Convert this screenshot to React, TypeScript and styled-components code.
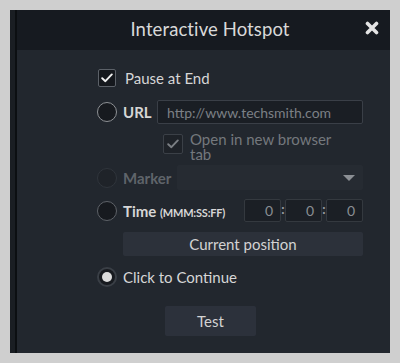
import React from 'react'
import styled, { createGlobalStyle } from 'styled-components'

const GlobalStyle = createGlobalStyle`
    html, body {
        margin: 0;
        padding: 0;
        background: #cfcfcf;
        font-family: Lato, "Open Sans", "Liberation Sans", sans-serif;
    }
`

export default function App() {
    return (
        <Page>
            <GlobalStyle />
            <Dialog>
                <EdgeStrip />
                <Main>
                    <Header>
                        <Title>Interactive Hotspot</Title>
                        <CloseButton aria-label="close">
                            <svg width="14" height="14" viewBox="0 0 14 14">
                                <path d="M2.5 2.5 L11.5 11.5 M11.5 2.5 L2.5 11.5" stroke="#e4e4e4" strokeWidth="3.6" strokeLinecap="round" />
                            </svg>
                        </CloseButton>
                    </Header>
                    <Body>
                        <Row $mt={0}>
                            <CheckBox $checked>
                                <CheckMark color="#f0f0f0" />
                            </CheckBox>
                            <Label $pad={9}>Pause at End</Label>
                        </Row>

                        <Row $mt={12}>
                            <Radio />
                            <Label $pad={6} $bold $width={40}>URL</Label>
                            <TextInput placeholder="http://www.techsmith.com" />
                        </Row>

                        <SubRow>
                            <CheckBox $disabled $size={20}>
                                <CheckMark color="#7b7f84" />
                            </CheckBox>
                            <SubLabel>Open in new browser tab</SubLabel>
                        </SubRow>

                        <Row $mt={3}>
                            <Radio $disabled />
                            <Label $pad={6} $bold $dim $width={60}>Marker</Label>
                            <Select>
                                <Caret />
                            </Select>
                        </Row>

                        <Row $mt={9}>
                            <Radio $muted />
                            <Label $pad={6} $bold>Time <Small>(MMM:SS:FF)</Small></Label>
                            <TimeGroup>
                                <TimeBox>0</TimeBox>
                                <Colon>:</Colon>
                                <TimeBox>0</TimeBox>
                                <Colon>:</Colon>
                                <TimeBox>0</TimeBox>
                            </TimeGroup>
                        </Row>

                        <WideButton>Current position</WideButton>

                        <Row $mt={11}>
                            <Radio $checked />
                            <Label $pad={6}>Click to Continue</Label>
                        </Row>

                        <TestButton>Test</TestButton>
                    </Body>
                </Main>
            </Dialog>
        </Page>
    )
}

function CheckMark({ color }: { color: string }) {
    return (
        <svg width="12" height="10" viewBox="0 0 12 10">
            <path d="M1.2 5.2 L4.4 8.2 L10.8 1.4" fill="none" stroke={color} strokeWidth="1.9" strokeLinecap="round" strokeLinejoin="round" />
        </svg>
    )
}

const Page = styled.div`
    padding: 10px;
    width: 400px;
    height: 363px;
    box-sizing: border-box;
`

const Dialog = styled.div`
    display: flex;
    height: 343px;
    background: #22272e;
`

const EdgeStrip = styled.div`
    width: 5px;
    background: #1a1e23;
    border-right: 2px solid #0c0f12;
`

const Main = styled.div`
    flex: 1;
    display: flex;
    flex-direction: column;
`

const Header = styled.div`
    height: 40px;
    display: flex;
    align-items: center;
    justify-content: center;
    position: relative;
    background: #161a20;
    padding-left: 13px;
`

const Title = styled.div`
    color: #d9d9d9;
    font-size: 18.5px;
    letter-spacing: 0.1px;
    margin-top: -3px;
`

const CloseButton = styled.div`
    position: absolute;
    right: 11px;
    top: 11px;
    display: flex;
`

const Body = styled.div`
    display: flex;
    flex-direction: column;
    align-items: flex-start;
    padding: 18px 27px 0 80px;
`

const Row = styled.div<{ $mt: number }>`
    display: flex;
    align-items: center;
    align-self: stretch;
    margin-top: ${p => p.$mt}px;
    min-height: 20px;
`

const CheckBox = styled.div<{ $checked?: boolean; $disabled?: boolean; $size?: number }>`
    width: ${p => p.$size ?? 18}px;
    height: ${p => p.$size ?? 18}px;
    margin-left: 1px;
    box-sizing: border-box;
    border: 1.5px solid ${p => (p.$disabled ? '#3b4047' : '#5c6168')};
    border-radius: 2px;
    background: ${p => (p.$disabled ? '#1e2228' : '#15181d')};
    display: flex;
    align-items: center;
    justify-content: center;
    flex-shrink: 0;
`

const Radio = styled.div<{ $checked?: boolean; $disabled?: boolean; $muted?: boolean }>`
    width: 20px;
    height: 20px;
    box-sizing: border-box;
    border-radius: 50%;
    flex-shrink: 0;
    border: ${p => (p.$checked ? '2.5px' : '1.5px')} solid
        ${p => (p.$disabled ? '#30353c' : p.$checked ? '#3a3f46' : p.$muted ? '#5e6268' : '#8e9195')};
    background: ${p => (p.$disabled ? '#1f2329' : '#171a1f')};
    display: flex;
    align-items: center;
    justify-content: center;
    &::after {
        content: '';
        display: ${p => (p.$checked ? 'block' : 'none')};
        width: 10px;
        height: 10px;
        border-radius: 50%;
        background: #dcdcdc;
    }
`

const Label = styled.div<{ $pad: number; $bold?: boolean; $dim?: boolean; $width?: number }>`
    padding-left: ${p => p.$pad}px;
    width: ${p => (p.$width ? `${p.$width}px` : 'auto')};
    box-sizing: border-box;
    flex-shrink: 0;
    font-size: 15px;
    font-weight: ${p => (p.$bold ? 700 : 400)};
    color: ${p => (p.$dim ? '#5f646a' : '#d6d6d6')};
    white-space: nowrap;
`

const Small = styled.span`
    font-size: 11px;
    font-weight: 700;
    letter-spacing: -0.2px;
`

const TextInput = styled.input`
    flex: 1;
    height: 24px;
    box-sizing: border-box;
    background: #1a1e24;
    border: 1px solid #3a3f47;
    border-radius: 2px;
    padding: 0 9px;
    font-family: inherit;
    font-size: 14px;
    color: #d6d6d6;
    outline: none;
    &::placeholder {
        color: #7c8086;
    }
`

const SubRow = styled.div`
    display: flex;
    align-items: flex-start;
    margin-top: 10px;
    padding-left: 65px;
`

const SubLabel = styled.div`
    width: 150px;
    padding-left: 7px;
    margin-top: -2px;
    font-size: 15px;
    line-height: 15px;
    color: #74787d;
`

const Select = styled.div`
    flex: 1;
    height: 25px;
    background: #262b32;
    border-radius: 2px;
    display: flex;
    align-items: center;
    justify-content: flex-end;
    padding-right: 8px;
`

const Caret = styled.div`
    width: 0;
    height: 0;
    border-left: 6px solid transparent;
    border-right: 6px solid transparent;
    border-top: 6px solid #8b8f94;
`

const TimeGroup = styled.div`
    margin-left: auto;
    display: flex;
    align-items: center;
`

const TimeBox = styled.div`
    width: 37px;
    height: 23px;
    box-sizing: border-box;
    background: #1b1f25;
    border: 1px solid #34393f;
    border-radius: 2px;
    display: flex;
    align-items: center;
    justify-content: flex-end;
    padding-right: 7px;
    font-size: 14px;
    color: #8a8e93;
`

const Colon = styled.span`
    width: 4px;
    text-align: center;
    font-size: 13px;
    color: #9a9ea3;
    font-weight: 700;
    margin-top: -3px;
`

const WideButton = styled.div`
    align-self: stretch;
    margin: 10px 0 0 26px;
    height: 24px;
    background: #2c313a;
    border-radius: 2px;
    display: flex;
    align-items: center;
    justify-content: center;
    font-size: 15px;
    color: #d3d3d3;
`

const TestButton = styled.div`
    margin: 19px 0 0 68px;
    width: 91px;
    height: 30px;
    background: #2c313b;
    border-radius: 2px;
    display: flex;
    align-items: center;
    justify-content: center;
    font-size: 15px;
    color: #d3d3d3;
`
